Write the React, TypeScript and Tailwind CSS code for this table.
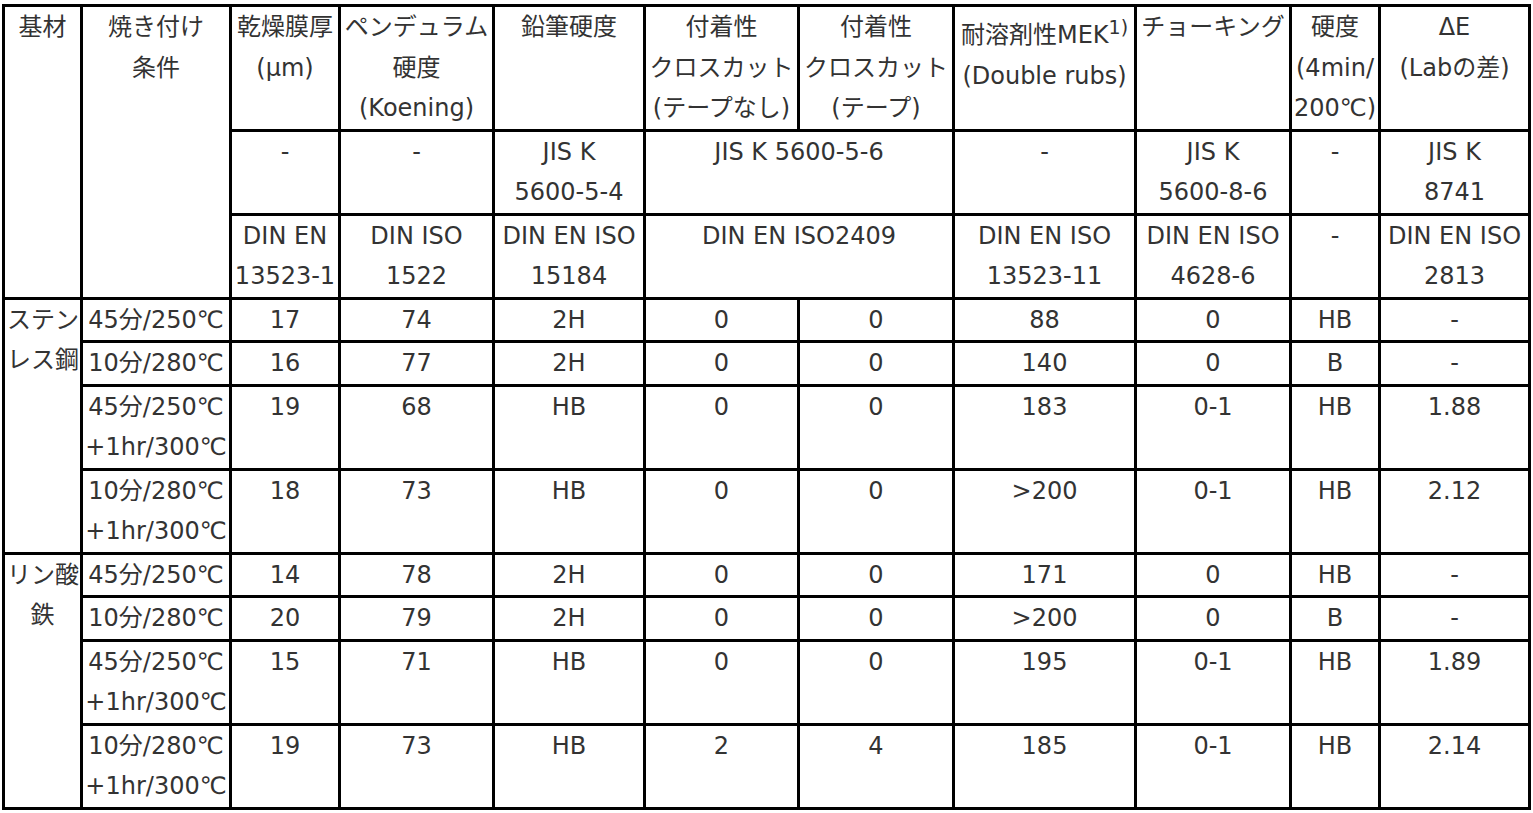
import type { ReactNode } from 'react';

const cols = [
    'w-[78px]',
    'w-[149px]',
    'w-[109px]',
    'w-[154px]',
    'w-[151px]',
    'w-[154px]',
    'w-[155px]',
    'w-[182px]',
    'w-[155px]',
    'w-[89px]',
    'w-[150px]',
];

type Row = {
    cond: string[];
    values: string[];
};

const stainless: Row[] = [
    { cond: ['45分/250℃'], values: ['17', '74', '2H', '0', '0', '88', '0', 'HB', '-'] },
    { cond: ['10分/280℃'], values: ['16', '77', '2H', '0', '0', '140', '0', 'B', '-'] },
    { cond: ['45分/250℃', '+1hr/300℃'], values: ['19', '68', 'HB', '0', '0', '183', '0-1', 'HB', '1.88'] },
    { cond: ['10分/280℃', '+1hr/300℃'], values: ['18', '73', 'HB', '0', '0', '>200', '0-1', 'HB', '2.12'] },
];

const phosphate: Row[] = [
    { cond: ['45分/250℃'], values: ['14', '78', '2H', '0', '0', '171', '0', 'HB', '-'] },
    { cond: ['10分/280℃'], values: ['20', '79', '2H', '0', '0', '>200', '0', 'B', '-'] },
    { cond: ['45分/250℃', '+1hr/300℃'], values: ['15', '71', 'HB', '0', '0', '195', '0-1', 'HB', '1.89'] },
    { cond: ['10分/280℃', '+1hr/300℃'], values: ['19', '73', 'HB', '2', '4', '185', '0-1', 'HB', '2.14'] },
];

const Cell = ({
    children,
    rowSpan,
    colSpan,
}: {
    children: ReactNode;
    rowSpan?: number;
    colSpan?: number;
}) => (
    <td
        rowSpan={rowSpan}
        colSpan={colSpan}
        className="border-r-[3px] border-b-[3px] border-black px-[2px] py-0 align-top text-center whitespace-nowrap"
    >
        {children}
    </td>
);

const Lines = ({ lines }: { lines: string[] }) => (
    <>
        {lines.map((l, i) => (
            <div key={i}>{l}</div>
        ))}
    </>
);

const Group = ({ label, rows }: { label: string[]; rows: Row[] }) => (
    <>
        {rows.map((r, i) => (
            <tr key={i}>
                {i === 0 && (
                    <Cell rowSpan={rows.length}>
                        <Lines lines={label} />
                    </Cell>
                )}
                <Cell>
                    <Lines lines={r.cond} />
                </Cell>
                {r.values.map((v, j) => (
                    <Cell key={j}>{v}</Cell>
                ))}
            </tr>
        ))}
    </>
);

function App() {
    return (
        <div className="min-h-screen bg-white pt-[4px] pl-[2px]">
            <table
                className="table-fixed border-separate border-spacing-0 border-l-[3px] border-t-[3px] border-black text-[24px] leading-[40.5px] text-[#333]"
                style={{ fontFamily: '"DejaVu Sans", "Noto Sans CJK JP", sans-serif', width: 1529 }}
            >
                <colgroup>
                    {cols.map((c, i) => (
                        <col key={i} className={c} />
                    ))}
                </colgroup>
                <tbody>
                    <tr>
                        <Cell rowSpan={3}>基材</Cell>
                        <Cell rowSpan={3}>
                            <Lines lines={['焼き付け', '条件']} />
                        </Cell>
                        <Cell>
                            <Lines lines={['乾燥膜厚', '(µm)']} />
                        </Cell>
                        <Cell>
                            <Lines lines={['ペンデュラム', '硬度', '(Koening)']} />
                        </Cell>
                        <Cell>鉛筆硬度</Cell>
                        <Cell>
                            <Lines lines={['付着性', 'クロスカット', '(テープなし)']} />
                        </Cell>
                        <Cell>
                            <Lines lines={['付着性', 'クロスカット', '(テープ)']} />
                        </Cell>
                        <Cell>
                            <div>
                                耐溶剤性MEK
                                <sup className="static align-super text-[19px] leading-[40px]">1)</sup>
                            </div>
                            <div>(Double rubs)</div>
                        </Cell>
                        <Cell>チョーキング</Cell>
                        <Cell>
                            <Lines lines={['硬度', '(4min/', '200℃)']} />
                        </Cell>
                        <Cell>
                            <Lines lines={['ΔE', '(Labの差)']} />
                        </Cell>
                    </tr>
                    <tr>
                        <Cell>-</Cell>
                        <Cell>-</Cell>
                        <Cell>
                            <Lines lines={['JIS K', '5600-5-4']} />
                        </Cell>
                        <Cell colSpan={2}>JIS K 5600-5-6</Cell>
                        <Cell>-</Cell>
                        <Cell>
                            <Lines lines={['JIS K', '5600-8-6']} />
                        </Cell>
                        <Cell>-</Cell>
                        <Cell>
                            <Lines lines={['JIS K', '8741']} />
                        </Cell>
                    </tr>
                    <tr>
                        <Cell>
                            <Lines lines={['DIN EN', '13523-1']} />
                        </Cell>
                        <Cell>
                            <Lines lines={['DIN ISO', '1522']} />
                        </Cell>
                        <Cell>
                            <Lines lines={['DIN EN ISO', '15184']} />
                        </Cell>
                        <Cell colSpan={2}>DIN EN ISO2409</Cell>
                        <Cell>
                            <Lines lines={['DIN EN ISO', '13523-11']} />
                        </Cell>
                        <Cell>
                            <Lines lines={['DIN EN ISO', '4628-6']} />
                        </Cell>
                        <Cell>-</Cell>
                        <Cell>
                            <Lines lines={['DIN EN ISO', '2813']} />
                        </Cell>
                    </tr>
                    <Group label={['ステン', 'レス鋼']} rows={stainless} />
                    <Group label={['リン酸', '鉄']} rows={phosphate} />
                </tbody>
            </table>
        </div>
    );
}

export default App;
